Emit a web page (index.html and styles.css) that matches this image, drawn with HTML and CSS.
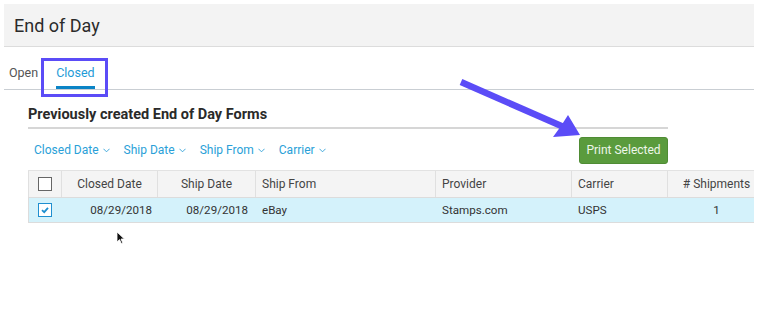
FILE: index.html
```html
<!DOCTYPE html>
<html>
<head>
<meta charset="utf-8">
<link rel="stylesheet" href="styles.css">
</head>
<body>
<div class="page">
  <div class="titlebar"><h1 class="title">End of Day</h1></div>
  <div class="tabs">
    <span class="tab">Open</span>
    <span class="tab active">Closed</span>
  </div>
  <div class="content">
    <div class="section">
      <h2 class="section-title">Previously created End of Day Forms</h2>
      <div class="toolbar">
        <div class="filters">
          <span class="filter">Closed Date <svg class="chev" viewBox="0 0 8 5"><path d="M0.5 0.5 L4 4 L7.5 0.5" fill="none" stroke="currentColor" stroke-width="1"/></svg></span>
          <span class="filter">Ship Date <svg class="chev" viewBox="0 0 8 5"><path d="M0.5 0.5 L4 4 L7.5 0.5" fill="none" stroke="currentColor" stroke-width="1"/></svg></span>
          <span class="filter">Ship From <svg class="chev" viewBox="0 0 8 5"><path d="M0.5 0.5 L4 4 L7.5 0.5" fill="none" stroke="currentColor" stroke-width="1"/></svg></span>
          <span class="filter">Carrier <svg class="chev" viewBox="0 0 8 5"><path d="M0.5 0.5 L4 4 L7.5 0.5" fill="none" stroke="currentColor" stroke-width="1"/></svg></span>
        </div>
        <button class="btn">Print Selected</button>
      </div>
    </div>
    <div class="table">
      <div class="row head">
        <div class="cell c-check"><span class="cb"></span></div>
        <div class="cell c-closed center">Closed Date</div>
        <div class="cell c-ship center">Ship Date</div>
        <div class="cell c-from">Ship From</div>
        <div class="cell c-prov">Provider</div>
        <div class="cell c-car">Carrier</div>
        <div class="cell c-num center">#&nbsp;Shipments</div>
      </div>
      <div class="row data">
        <div class="cell c-check"><span class="cb checked"><svg viewBox="0 0 10 10"><path d="M2 5.2 L4.2 7.2 L8 2.8" fill="none" stroke="#1e8fd0" stroke-width="1.8"/></svg></span></div>
        <div class="cell c-closed right">08/29/2018</div>
        <div class="cell c-ship right">08/29/2018</div>
        <div class="cell c-from">eBay</div>
        <div class="cell c-prov">Stamps.com</div>
        <div class="cell c-car">USPS</div>
        <div class="cell c-num center">1</div>
      </div>
    </div>
  </div>
  <div class="highlight"></div>
  <svg class="arrow" viewBox="0 0 140 70" width="140" height="70">
    <line x1="3" y1="7" x2="108" y2="53" stroke="#5b4cf7" stroke-width="6.5"/>
    <polygon points="122,60 95,62 103,51 110,40" fill="#5b4cf7"/>
  </svg>
  <svg class="cursor" viewBox="0 0 10 14" width="10" height="14">
    <path d="M1 1 L1 11 L3.5 8.6 L5.4 12.6 L6.8 12 L5 8 L8.4 8 Z" fill="#111" stroke="#fff" stroke-width="0.8"/>
  </svg>
</div>
</body>
</html>
```
FILE: styles.css
```css
* { box-sizing: border-box; }
html, body { margin: 0; padding: 0; background: #fff; }
body { font-family: Roboto, "Noto Sans", sans-serif; color: #333; }
.page { position: relative; width: 758px; height: 311px; padding: 4px 4px 0 4px; overflow: hidden; }
.titlebar { height: 43px; background: #f3f3f3; border-bottom: 1px solid #dcdcdc; display: flex; align-items: center; padding-left: 10px; }
.title { margin: 0; font-size: 18px; font-weight: 400; color: #2b2b2b; padding-top: 1px; }
.tabs { display: flex; gap: 18px; height: 43px; align-items: flex-end; padding-left: 5px; border-bottom: 1px solid #c9ced3; }
.tab { font-size: 12.5px; color: #555; padding-bottom: 6px; line-height: 15px; border-bottom: 3px solid transparent; }
.tab.active { color: #1e9bd7; border-bottom-color: #0b84c6; }
.content { padding-left: 24px; overflow: hidden; }
.section { width: 640px; }
.section-title { margin: 0; font-size: 14.5px; font-weight: 700; color: #2a2a2a; padding-top: 16px; height: 39px; border-bottom: 2px solid #d6d6d6; }
.toolbar { display: flex; justify-content: space-between; align-items: center; height: 40px; padding-top: 2px; }
.filters { display: flex; gap: 14px; padding-left: 6px; }
.filter { font-size: 12px; color: #2a9fd8; display: flex; align-items: center; gap: 4px; }
.chev { width: 7px; height: 5px; }
.btn { width: 89px; height: 27px; background: #5a9b3d; color: #eef6ea; border: 1px solid #4f8c34; border-radius: 3px; font-family: Roboto, sans-serif; font-size: 12px; padding: 0; }
.table { width: 738px; margin-top: 1px; border-top: 1px solid #e2e2e2; }
.row { display: flex; border-bottom: 1px solid #dcdcdc; }
.row.head { height: 27px; background: #f4f4f4; }
.row.data { height: 25px; background: #d4f2fb; }
.cell { font-size: 12px; display: flex; align-items: center; padding: 0 6px; border-right: 1px solid #e0e0e0; }
.head .cell { color: #444; }
.data .cell { border-right-color: transparent; color: #333; font-size: 11.6px; }
.row .c-check { border-left: 1px solid #e0e0e0; }
.data .c-check { border-left-color: #dcdcdc; }
.center { justify-content: center; }
.right { justify-content: flex-end; }
.c-check { width: 34px; justify-content: center; padding: 0; }
.c-closed { width: 96px; }
.c-closed.right { padding-right: 5px; }
.c-ship { width: 98px; }
.c-ship.right { padding-right: 7px; }
.c-from { width: 180px; }
.c-prov { width: 136px; }
.c-car { width: 96px; }
.c-num { width: 98px; }
.cb { width: 14px; height: 14px; border: 1px solid #666; background: #fff; display: block; }
.cb.checked { border-color: #1e8fd0; display: flex; align-items: center; justify-content: center; }
.cb svg { width: 10px; height: 10px; }
.highlight { position: absolute; left: 41px; top: 58px; width: 67px; height: 39px; border: 3.5px solid #5b4cf7; }
.arrow { position: absolute; left: 458px; top: 75px; }
.cursor { position: absolute; left: 116px; top: 231px; }
```
